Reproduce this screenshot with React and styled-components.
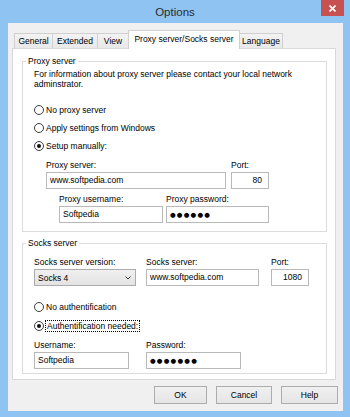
import styled, { createGlobalStyle } from "styled-components";

const GlobalStyle = createGlobalStyle`
  html, body {
    margin: 0;
    padding: 0;
  }
  body {
    font-family: "Liberation Sans", Arial, sans-serif;
    font-size: 8.5px;
    line-height: 10px;
    color: #000;
  }
`;

const TABS = [
  { label: "General", width: 39 },
  { label: "Extended", width: 46 },
  { label: "View", width: 32 },
  { label: "Proxy server/Socks server", width: 112, active: true },
  { label: "Language", width: 44 },
];

const App = () => {
  return (
    <>
      <GlobalStyle />
      <Window>
        <TitleBar>
          <span />
          <Title>Options</Title>
          <CloseButton>
            <svg width="7" height="7" viewBox="0 0 7 7">
              <path d="M0.5 0.5 L6.5 6.5 M6.5 0.5 L0.5 6.5" stroke="#fff" strokeWidth="1.6" />
            </svg>
          </CloseButton>
        </TitleBar>

        <Client>
          <TabStrip>
            {TABS.map((t) => (
              <Tab key={t.label} $w={t.width} $active={t.active}>
                {t.label}
              </Tab>
            ))}
          </TabStrip>

          <Panel>
            <GroupBox $pb={8}>
              <Caption>Proxy server</Caption>
              <Info>
                For information about proxy server please contact your local network
                <br />
                adminstrator.
              </Info>
              <RadioList $mt={12}>
                <RadioRow $h={18}>
                  <RadioCircle />
                  No proxy server
                </RadioRow>
                <RadioRow $h={18}>
                  <RadioCircle />
                  Apply settings from Windows
                </RadioRow>
                <RadioRow $h={18}>
                  <RadioCircle $checked />
                  Setup manually:
                </RadioRow>
              </RadioList>
              <FieldRow $indent={12} $gap={5} $mt={5}>
                <Field $w={180}>
                  <FieldLabel>Proxy server:</FieldLabel>
                  <TextBox>www.softpedia.com</TextBox>
                </Field>
                <Field $w={38}>
                  <FieldLabel>Port:</FieldLabel>
                  <TextBox $align="right">80</TextBox>
                </Field>
              </FieldRow>
              <FieldRow $indent={25} $gap={3} $mt={5}>
                <Field $w={104}>
                  <FieldLabel>Proxy username:</FieldLabel>
                  <TextBox>Softpedia</TextBox>
                </Field>
                <Field $w={103}>
                  <FieldLabel>Proxy password:</FieldLabel>
                  <TextBox>
                    <Dots>●●●●●●</Dots>
                  </TextBox>
                </Field>
              </FieldRow>
            </GroupBox>

            <GroupBox $mt={11} $pb={4}>
              <Caption>Socks server</Caption>
              <FieldRow $indent={0} $gap={10} $mt={9}>
                <Field $w={102}>
                  <FieldLabel>Socks server version:</FieldLabel>
                  <SelectBox>
                    Socks 4
                    <svg width="6" height="4" viewBox="0 0 6 4">
                      <polyline points="0.5,0.5 3,3 5.5,0.5" fill="none" stroke="#333" strokeWidth="1" />
                    </svg>
                  </SelectBox>
                </Field>
                <Field $w={113}>
                  <FieldLabel>Socks server:</FieldLabel>
                  <TextBox>www.softpedia.com</TextBox>
                </Field>
                <Field $w={38} $ml={2}>
                  <FieldLabel>Port:</FieldLabel>
                  <TextBox $align="right">1080</TextBox>
                </Field>
              </FieldRow>
              <RadioList $mt={11}>
                <RadioRow $h={19}>
                  <RadioCircle />
                  No authentification
                </RadioRow>
                <RadioRow $h={19}>
                  <RadioCircle $checked />
                  <FocusLabel>Authentification needed:</FocusLabel>
                </RadioRow>
              </RadioList>
              <FieldRow $indent={0} $gap={17} $mt={5}>
                <Field $w={95}>
                  <FieldLabel>Username:</FieldLabel>
                  <TextBox>Softpedia</TextBox>
                </Field>
                <Field $w={95}>
                  <FieldLabel>Password:</FieldLabel>
                  <TextBox>
                    <Dots>●●●●●●●</Dots>
                  </TextBox>
                </Field>
              </FieldRow>
            </GroupBox>
          </Panel>

          <ButtonBar>
            <Button $w={53}>OK</Button>
            <Button $w={56}>Cancel</Button>
            <Button $w={57}>Help</Button>
          </ButtonBar>
        </Client>
      </Window>
    </>
  );
};

const Window = styled.div`
  width: 350px;
  height: 417px;
  background: #8fc4f2;
  display: flex;
  flex-direction: column;
  overflow: hidden;
`;

const TitleBar = styled.div`
  height: 23px;
  display: grid;
  grid-template-columns: 1fr auto 1fr;
  align-items: start;
`;

const Title = styled.div`
  font-size: 11.5px;
  line-height: 23px;
  padding-top: 1px;
  color: #2b2b2b;
`;

const CloseButton = styled.div`
  justify-self: end;
  width: 23px;
  height: 16px;
  margin-right: 6px;
  background: #c75050;
  display: flex;
  align-items: center;
  justify-content: center;
`;

const Client = styled.div`
  flex: 1;
  margin: 0 7px 6px 8px;
  background: #f0f0f0;
  display: flex;
  flex-direction: column;
`;

const TabStrip = styled.div`
  display: flex;
  align-items: flex-end;
  height: 18px;
  margin-top: 7px;
  padding-left: 6px;
`;

const Tab = styled.div`
  box-sizing: border-box;
  width: ${(p) => p.$w}px;
  height: ${(p) => (p.$active ? 19 : 15)}px;
  margin-bottom: ${(p) => (p.$active ? -1 : 0)}px;
  margin-left: -1px;
  &:first-child {
    margin-left: 0;
  }
  border: 1px solid #d0d0d0;
  border-bottom: none;
  background: ${(p) => (p.$active ? "#fff" : "linear-gradient(#f3f3f3, #e8e8e8)")};
  display: flex;
  align-items: center;
  justify-content: center;
  padding-bottom: ${(p) => (p.$active ? 3 : 0)}px;
  white-space: nowrap;
  position: relative;
  z-index: ${(p) => (p.$active ? 2 : 0)};
`;

const Panel = styled.div`
  margin: 0 7px 0 4px;
  border: 1px solid #d9d9d9;
  background: #fff;
  padding: 12px 8px 5px 9px;
  display: flex;
  flex-direction: column;
`;

const GroupBox = styled.div`
  border: 1px solid #dcdcdc;
  margin-top: ${(p) => p.$mt || 0}px;
  padding: 0 0 ${(p) => p.$pb}px 11px;
  display: flex;
  flex-direction: column;
`;

const Caption = styled.div`
  align-self: flex-start;
  height: 10px;
  margin: -6px 0 0 -8px;
  padding: 0 2px;
  background: #fff;
  white-space: nowrap;
`;

const Info = styled.div`
  margin-top: 3px;
  white-space: nowrap;
`;

const RadioList = styled.div`
  margin-top: ${(p) => p.$mt}px;
  display: flex;
  flex-direction: column;
`;

const RadioRow = styled.div`
  height: ${(p) => p.$h}px;
  display: flex;
  align-items: center;
  gap: 2px;
  white-space: nowrap;
`;

const RadioCircle = styled.span`
  box-sizing: border-box;
  width: 10px;
  height: 10px;
  border-radius: 50%;
  border: 1px solid #3c3c3c;
  background: #fff;
  display: flex;
  align-items: center;
  justify-content: center;
  &::after {
    content: "";
    display: ${(p) => (p.$checked ? "block" : "none")};
    width: 4px;
    height: 4px;
    border-radius: 50%;
    background: #111;
  }
`;

const FocusLabel = styled.span`
  outline: 1px dotted #000;
  line-height: 10px;
  padding: 0 1px;
`;

const FieldRow = styled.div`
  display: flex;
  gap: ${(p) => p.$gap}px;
  margin-top: ${(p) => p.$mt}px;
  padding-left: ${(p) => p.$indent}px;
`;

const Field = styled.div`
  width: ${(p) => p.$w}px;
  margin-left: ${(p) => p.$ml || 0}px;
  display: flex;
  flex-direction: column;
  gap: 2px;
`;

const FieldLabel = styled.div`
  height: 10px;
  white-space: nowrap;
`;

const TextBox = styled.div`
  box-sizing: border-box;
  height: 17px;
  border: 1px solid #b9b9b9;
  background: #fff;
  padding: 0 ${(p) => (p.$align === "right" ? 6 : 2)}px 0 3px;
  line-height: 15px;
  text-align: ${(p) => p.$align || "left"};
  white-space: nowrap;
  overflow: hidden;
`;

const Dots = styled.span`
  font-family: "DejaVu Sans", sans-serif;
  font-size: 6.5px;
  letter-spacing: 1.2px;
`;

const SelectBox = styled.div`
  box-sizing: border-box;
  height: 17px;
  border: 1px solid #acacac;
  background: linear-gradient(#f0f0f0, #e3e3e3);
  padding: 0 4px 0 3px;
  display: flex;
  align-items: center;
  justify-content: space-between;
  white-space: nowrap;
`;

const ButtonBar = styled.div`
  display: flex;
  justify-content: flex-end;
  gap: 9px;
  margin-top: 6px;
  padding-right: 5px;
`;

const Button = styled.div`
  box-sizing: border-box;
  width: ${(p) => p.$w}px;
  height: 18px;
  border: 1px solid #acacac;
  background: linear-gradient(#f0f0f0, #e5e5e5);
  display: flex;
  align-items: center;
  justify-content: center;
`;

export default App;
